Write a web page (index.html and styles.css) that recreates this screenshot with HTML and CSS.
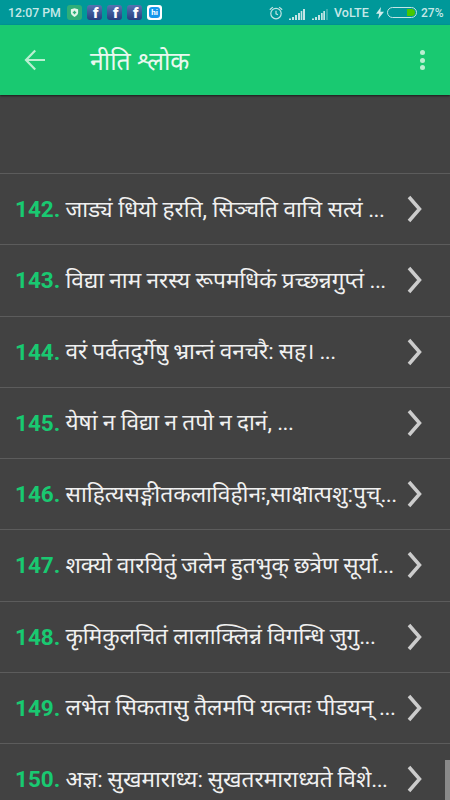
FILE: index.html
```html
<!DOCTYPE html>
<html lang="hi">
<head>
  <meta charset="utf-8">
  <title>नीति श्लोक</title>
  <meta name="viewport" content="width=device-width, initial-scale=1.0">
  <link rel="stylesheet" href="styles.css">
</head>
<body>
  <div class="screen">
    <div class="status">
      <span class="clock">12:07 PM</span>
      <div class="notices">
        <span class="notice shield">
          <svg width="15" height="15" viewBox="0 0 15 15"><path d="M7.5 3.2l3.6 1.1v3.3c0 2.1-1.5 3.4-3.6 4.3-2.1-.9-3.6-2.2-3.6-4.3V4.3z" fill="#e4f5ea"/><path d="M7.5 5.8v3.4M5.8 7.5h3.4" stroke="#2fae78" stroke-width="1.3"/></svg>
        </span>
        <span class="notice fb">f</span>
        <span class="notice fb">f</span>
        <span class="notice fb">f</span>
        <span class="notice hike"><b>hi</b></span>
      </div>
      <div class="system">
        <svg class="alarm" width="14" height="14" viewBox="0 0 14 14" fill="none" stroke="#c2e5e5" stroke-width="1.2"><circle cx="7" cy="7.6" r="5.2"/><path d="M7 4.8v3l2 1M.8 3.8L3.8 1.1M13.2 3.8l-3-2.7"/></svg>
        <svg class="signal" width="16" height="11" viewBox="0 0 16 11" fill="#c2e5e5"><path d="M0 9.5h2V11H0zM3 8h2v3H3zM6 6h2v5H6zM9 4h2v7H9zM11.700 2h1.600v9h-1.600zM14 0h2v11h-2z"/></svg>
        <svg class="signal" width="16" height="11" viewBox="0 0 16 11" fill="#c2e5e5"><path d="M0 9.5h2V11H0zM3 8h2v3H3zM6 6h2v5H6zM9 4h1.700v7H9zM11.300 2H13v9h-1.700z"/><path d="M14 0h2v11h-2z" opacity=".3"/></svg>
        <span class="volte">VoLTE</span>
        <svg class="bolt" width="8" height="12" viewBox="0 0 8 12" fill="#d0ebeb"><path d="M5 0L0 6.8h3.2L2.2 12 8 4.8H4.4z"/></svg>
        <span class="battery"><i></i></span>
        <span class="percent">27%</span>
      </div>
    </div>

    <div class="toolbar">
      <svg class="back" width="22" height="22" viewBox="0 0 22 22" fill="none" stroke="#b9efd1" stroke-width="2.2"><path d="M21 11H2.5M11.2 1.5L2 11l9.2 9.5"/></svg>
      <h1>नीति श्लोक</h1>
      <div class="more"><i></i><i></i><i></i></div>
    </div>

    <div class="list">
      <div class="row blank"></div>
      <div class="row"><b>142.</b><span>जाड्यं धियो हरति, सिञ्चति वाचि सत्यं <em>...</em></span><svg class="arrow" viewBox="0 0 16 28"><path d="M2 2l10.5 12L2 26"/></svg></div>
      <div class="row snug"><b>143.</b><span>विद्या नाम नरस्य रूपमधिकं प्रच्छन्नगुप्तं <em>...</em></span><svg class="arrow" viewBox="0 0 16 28"><path d="M2 2l10.5 12L2 26"/></svg></div>
      <div class="row tight"><b>144.</b><span>वरं पर्वतदुर्गेषु भ्रान्तं वनचरै: सह। <em>...</em></span><svg class="arrow" viewBox="0 0 16 28"><path d="M2 2l10.5 12L2 26"/></svg></div>
      <div class="row snug"><b>145.</b><span>येषां न विद्या न तपो न दानं, <em>...</em></span><svg class="arrow" viewBox="0 0 16 28"><path d="M2 2l10.5 12L2 26"/></svg></div>
      <div class="row wide"><b>146.</b><span>साहित्यसङ्गीतकलाविहीनः,साक्षात्पशु:पुच्<em>...</em></span><svg class="arrow" viewBox="0 0 16 28"><path d="M2 2l10.5 12L2 26"/></svg></div>
      <div class="row tight"><b>147.</b><span>शक्यो वारयितुं जलेन हुतभुक् छत्रेण सूर्या<em>...</em></span><svg class="arrow" viewBox="0 0 16 28"><path d="M2 2l10.5 12L2 26"/></svg></div>
      <div class="row snug"><b>148.</b><span>कृमिकुलचितं लालाक्लिन्नं विगन्धि जुगु<em>...</em></span><svg class="arrow" viewBox="0 0 16 28"><path d="M2 2l10.5 12L2 26"/></svg></div>
      <div class="row wide"><b>149.</b><span>लभेत सिकतासु तैलमपि यत्नतः पीडयन् <em>...</em></span><svg class="arrow" viewBox="0 0 16 28"><path d="M2 2l10.5 12L2 26"/></svg></div>
      <div class="row tight"><b>150.</b><span>अज्ञ: सुखमाराध्य: सुखतरमाराध्यते विशे<em>...</em></span><svg class="arrow" viewBox="0 0 16 28"><path d="M2 2l10.5 12L2 26"/></svg></div>
      <div class="thumb"></div>
    </div>
  </div>
</body>
</html>
```
FILE: styles.css
```css
body {
  margin: 0;
  background: #424242;
  font-family: Roboto, "Noto Sans", sans-serif;
}
.screen {
  display: flex;
  flex-direction: column;
  height: 800px;
  overflow: hidden;
}

/* status bar */
.status {
  display: flex;
  align-items: center;
  height: 25px;
  flex: none;
  box-sizing: border-box;
  padding: 0 8px;
  background: #009899;
  color: #c6e8e8;
  font-size: 12.3px;
  font-weight: 500;
}
.clock {
  width: 59px;
  white-space: nowrap;
}
.notices {
  display: flex;
  gap: 5px;
}
.notice {
  width: 15px;
  height: 15px;
  border-radius: 3px;
}
.shield {
  background: #2fae78;
}
.shield svg {
  display: block;
}
.fb {
  background: linear-gradient(#5873b0, #263f80);
  color: #fff;
  font-size: 15px;
  font-weight: 900;
  line-height: 17px;
  text-indent: 6px;
}
.hike {
  display: flex;
  align-items: center;
  justify-content: center;
  background: #fff;
}
.hike b {
  width: 11px;
  height: 11px;
  border-radius: 3px;
  background: #1597ec;
  color: #fff;
  font-size: 8px;
  line-height: 11px;
  text-align: center;
}
.system {
  display: flex;
  align-items: center;
  margin-left: auto;
}
.alarm {
  margin-right: 6px;
}
.signal {
  margin: 3px 7px 0 0;
}
.volte {
  width: 36px;
  margin: 0 6px 0 -1px;
  font-size: 12.5px;
}
.bolt {
  margin-right: 3px;
}
.battery {
  display: flex;
  justify-content: flex-end;
  width: 30px;
  height: 11px;
  box-sizing: border-box;
  margin-right: 4px;
  padding: 1px;
  border: 1px solid #c2e5e5;
  border-radius: 6px;
}
.battery i {
  width: 8px;
  border-radius: 0 4px 4px 0;
  background: #48c800;
}
.percent {
  width: 21px;
  font-size: 12px;
}

/* toolbar */
.toolbar {
  display: flex;
  align-items: center;
  height: 70px;
  flex: none;
  box-sizing: border-box;
  padding: 0 25px 0 24px;
  background: #19c971;
  box-shadow: 0 1px 2px rgba(0, 0, 0, 0.6);
  z-index: 1;
}
.toolbar h1 {
  flex: 1;
  margin: 0 0 0 44px;
  color: #e9f8ef;
  font-size: 24.8px;
  font-weight: 400;
}
.more {
  display: flex;
  flex-direction: column;
  gap: 2.5px;
}
.more i {
  width: 5px;
  height: 5px;
  border-radius: 50%;
  background: #b9efd1;
}

/* list of verses */
.list {
  position: relative;
  flex: 1;
  overflow: hidden;
}
.row {
  display: flex;
  align-items: center;
  height: 71.25px;
  box-sizing: border-box;
  padding: 0 27px 0 15px;
  border-bottom: 1px solid #5c5c5c;
}
.blank {
  height: 79px;
}
.row b {
  width: 50.5px;
  color: #19c971;
  font-size: 22.5px;
  font-weight: 700;
}
.row span {
  flex: 1;
  padding-bottom: 2px;
  color: #f0f0f0;
  font-size: 22.6px;
  white-space: nowrap;
}
.row em {
  font-style: normal;
  letter-spacing: -0.6px;
}
.snug span {
  word-spacing: -0.3px;
}
.tight span {
  word-spacing: -0.7px;
}
.wide span {
  font-size: 22.75px;
}
.arrow {
  flex: none;
  width: 16px;
  height: 28px;
  fill: none;
  stroke: #ccc;
  stroke-width: 3.5;
}
.thumb {
  position: absolute;
  right: 0;
  bottom: 0;
  width: 5px;
  height: 40px;
  background: #8a8a8a;
}
```
